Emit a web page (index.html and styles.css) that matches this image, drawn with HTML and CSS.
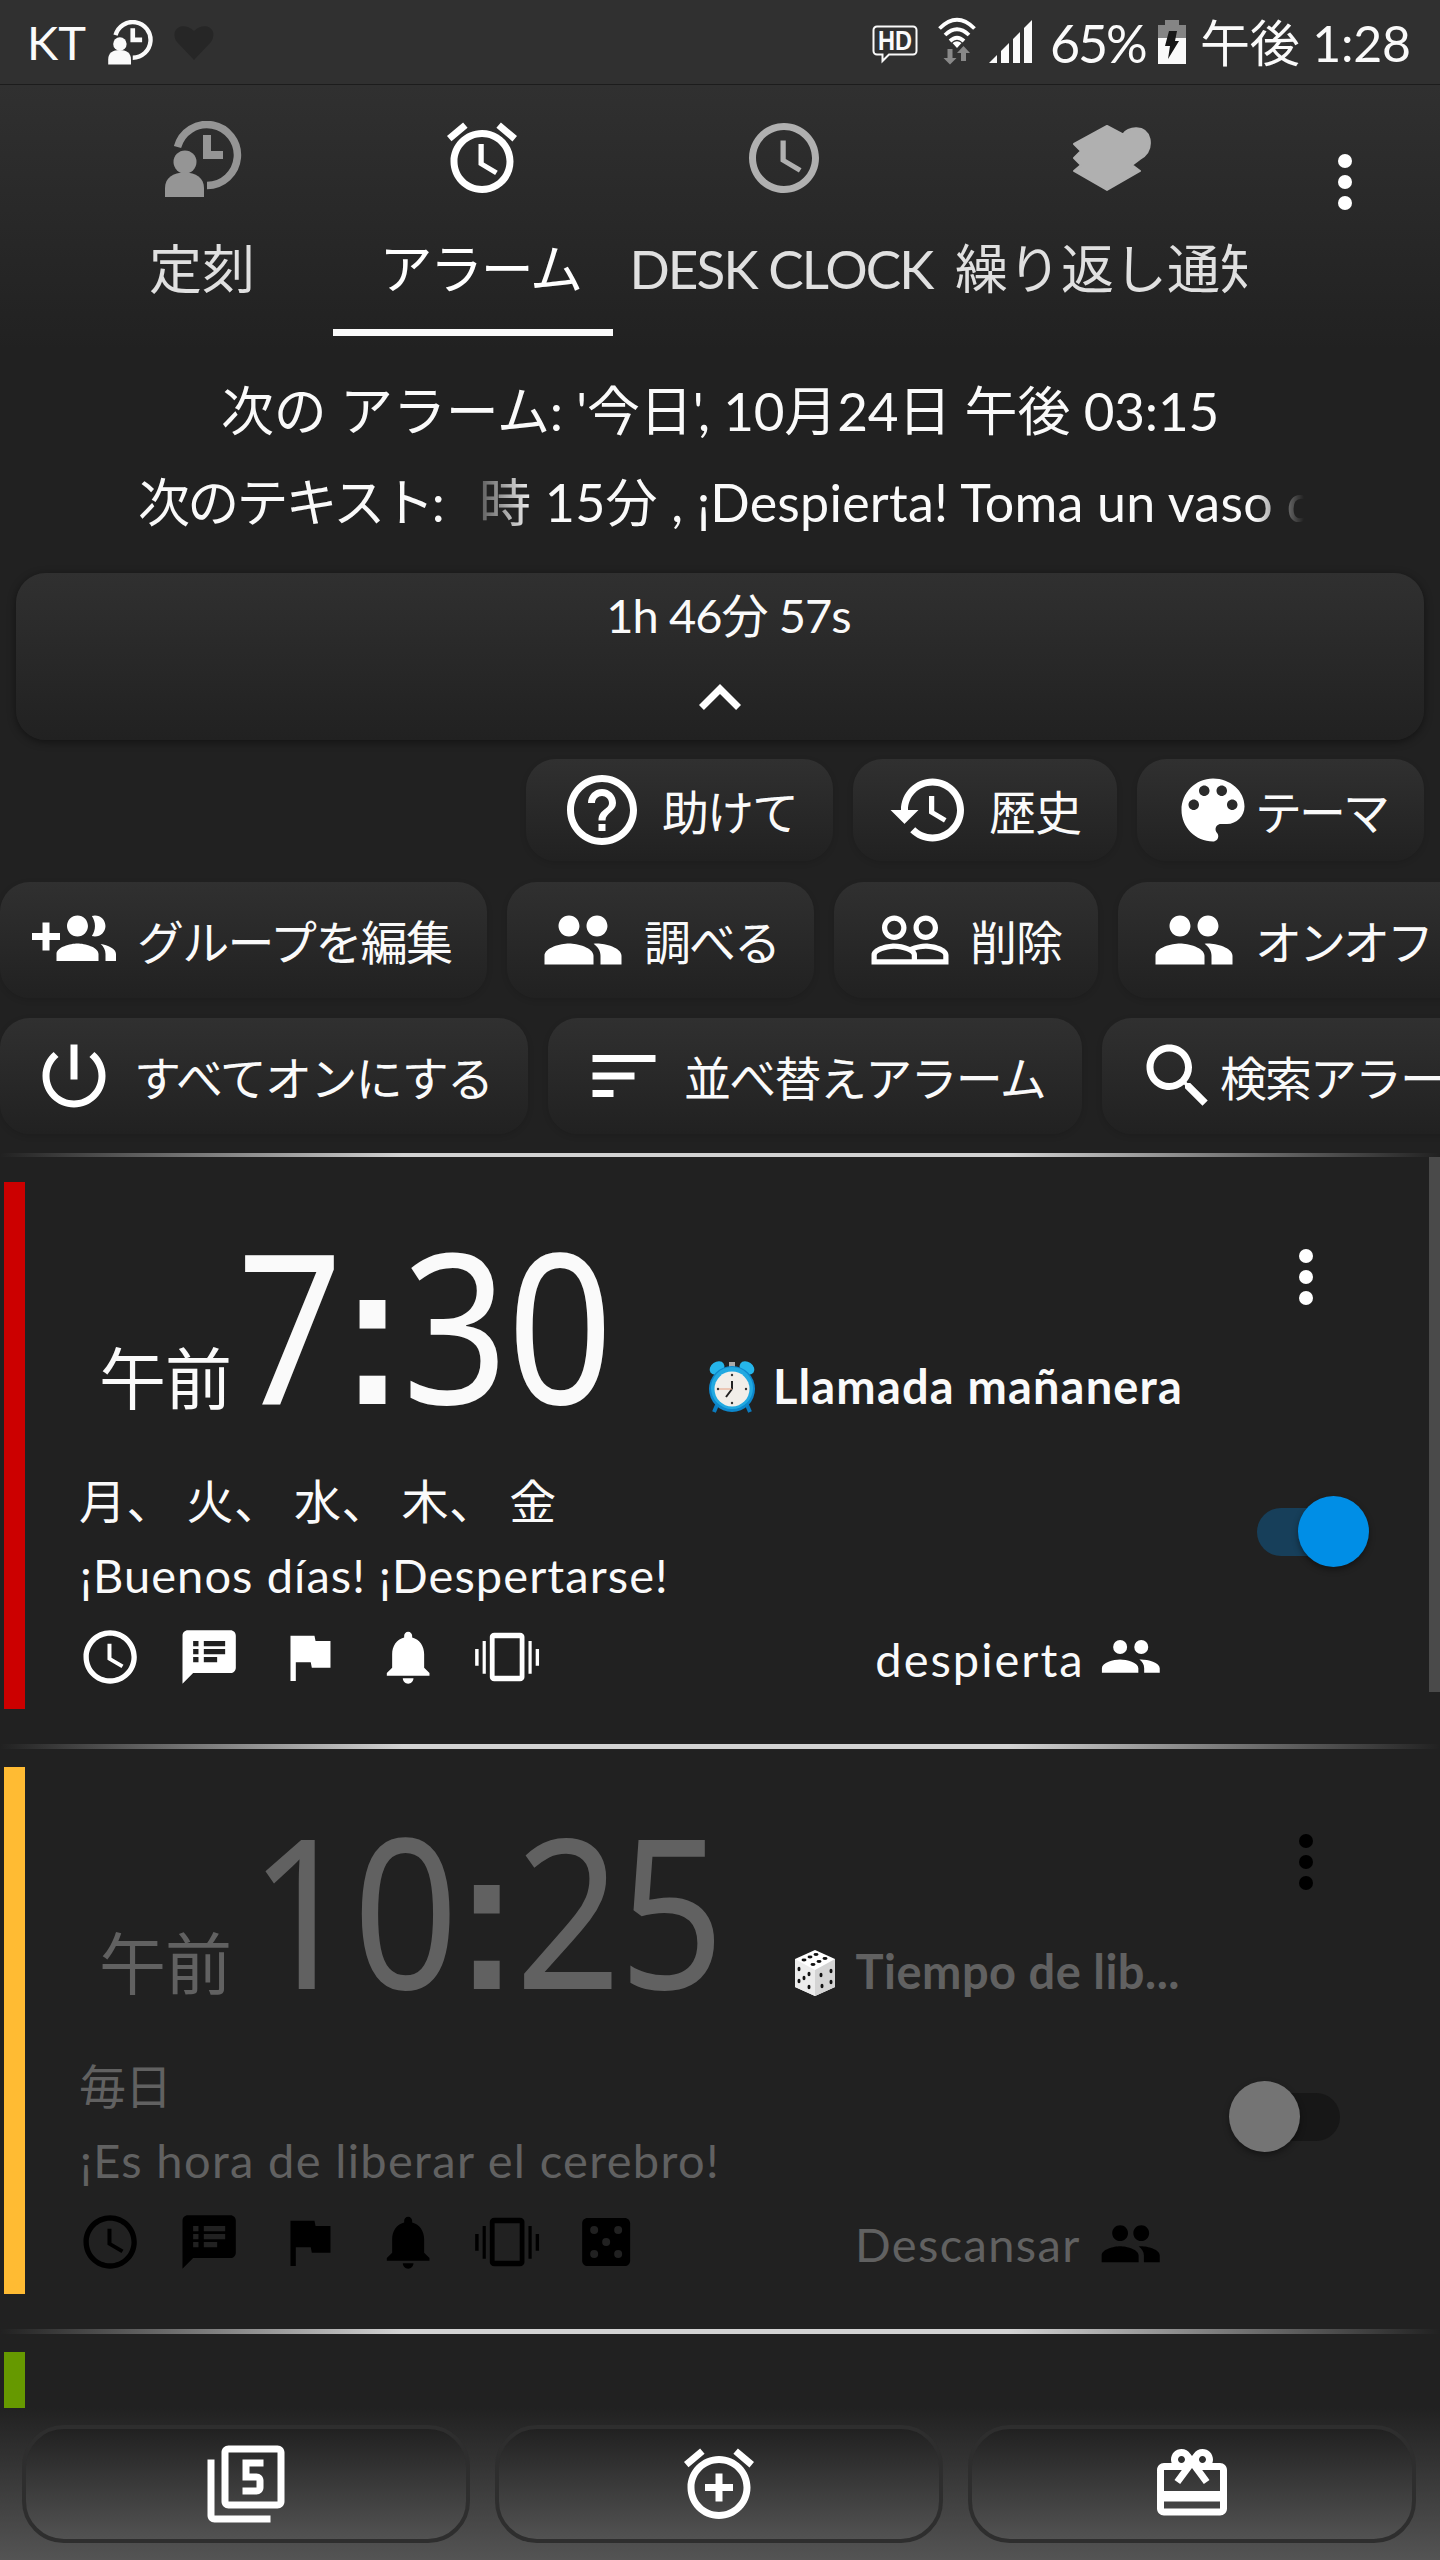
FILE: index.html
```html
<!DOCTYPE html>
<html lang="ja">
<head>
<meta charset="utf-8">
<title>アラーム</title>
<link rel="stylesheet" href="styles.css">
</head>
<body>
<svg class="sprite" aria-hidden="true">
  <symbol id="person-clock" viewBox="0 0 78 77"><path d="M12.5 26A30.5 30.5 0 1 1 42 64.5" fill="none" stroke="currentColor" stroke-width="7.5"/><path d="M38 14h8v16h12v8H38Z"/><ellipse cx="20" cy="41" rx="11.5" ry="11.5"/><path d="M0 76V67C0 57 8 51.500 19.500 51.500S39 57 39 67V76Z"/></symbol>
  <symbol id="alarm" viewBox="0 0 24 24"><path d="M22 5.720l-4.600-3.860-1.290 1.530 4.600 3.860L22 5.720zM7.880 3.390L6.600 1.860 2 5.710l1.290 1.530 4.590-3.850zM12.500 8H11v6l4.750 2.850.75-1.230-4-2.370V8zM12 4c-4.970 0-9 4.030-9 9s4.020 9 9 9c4.970 0 9-4.030 9-9s-4.030-9-9-9zm0 16c-3.870 0-7-3.130-7-7s3.130-7 7-7 7 3.130 7 7-3.130 7-7 7z"/></symbol>
  <symbol id="clock" viewBox="0 0 24 24"><path d="M11.990 2C6.470 2 2 6.480 2 12s4.470 10 9.990 10C17.520 22 22 17.520 22 12S17.520 2 11.990 2zM12 20c-4.420 0-8-3.580-8-8s3.580-8 8-8 8 3.580 8 8-3.580 8-8 8zm.5-13H11v6l5.250 3.150.75-1.230-4.500-2.670V7z"/></symbol>
  <symbol id="stack" viewBox="0 0 78 66"><path stroke="currentColor" stroke-width="2" stroke-linejoin="round" d="M34 1L50 9.500C54 2 73 -1 76.500 14C78.500 25 72 31 67 34L59 40L67 46L34 65L1 46L8 40L1 33L8 26L1 19Z"/></symbol>
  <symbol id="more" viewBox="0 0 24 24"><circle cx="12" cy="6" r="2"/><circle cx="12" cy="12" r="2"/><circle cx="12" cy="18" r="2"/></symbol>
  <symbol id="chevron" viewBox="0 0 24 24"><path d="M12 8l-6 6 1.410 1.410L12 10.830l4.590 4.580L18 14z"/></symbol>
  <symbol id="help" viewBox="0 0 24 24"><path d="M11 18h2v-2h-2v2zm1-16C6.480 2 2 6.480 2 12s4.480 10 10 10 10-4.480 10-10S17.520 2 12 2zm0 18c-4.410 0-8-3.590-8-8s3.590-8 8-8 8 3.590 8 8-3.590 8-8 8zm0-14c-2.210 0-4 1.790-4 4h2c0-1.100.9-2 2-2s2 .9 2 2c0 2-3 1.750-3 5h2c0-2.250 3-2.500 3-5 0-2.210-1.790-4-4-4z"/></symbol>
  <symbol id="history" viewBox="0 0 24 24"><path d="M13 3c-4.970 0-9 4.030-9 9H1l3.890 3.890.07.14L9 12H6c0-3.870 3.130-7 7-7s7 3.130 7 7-3.130 7-7 7c-1.930 0-3.680-.79-4.940-2.060l-1.420 1.420C8.270 19.990 10.510 21 13 21c4.970 0 9-4.030 9-9s-4.030-9-9-9zm-1 5v5l4.280 2.540.72-1.210-3.500-2.080V8H12z"/></symbol>
  <symbol id="palette" viewBox="0 0 24 24"><path d="M12 3c-4.970 0-9 4.030-9 9s4.030 9 9 9c.83 0 1.500-.67 1.500-1.500 0-.39-.15-.74-.39-1.010-.23-.26-.38-.61-.38-.99 0-.83.67-1.500 1.500-1.500H16c2.760 0 5-2.240 5-5 0-4.420-4.030-8-9-8zm-5.500 9c-.83 0-1.500-.67-1.500-1.500S5.670 9 6.500 9 8 9.670 8 10.500 7.330 12 6.500 12zm3-4C8.670 8 8 7.330 8 6.500S8.670 5 9.500 5s1.500.67 1.500 1.500S10.330 8 9.500 8zm5 0c-.83 0-1.500-.67-1.500-1.500S13.670 5 14.500 5s1.500.67 1.500 1.500S15.330 8 14.500 8zm3 4c-.83 0-1.500-.67-1.500-1.500S16.670 9 17.500 9s1.500.67 1.500 1.500-.67 1.500-1.500 1.500z"/></symbol>
  <symbol id="group-add" viewBox="0 0 24 24"><path d="M8 10H5V7H3v3H0v2h3v3h2v-3h3v-2zm10 1c1.660 0 2.990-1.340 2.990-3S19.660 5 18 5c-.32 0-.63.05-.91.14.57.81.9 1.790.9 2.860s-.34 2.040-.9 2.860c.28.09.59.14.91.14zm-5 0c1.660 0 2.990-1.340 2.990-3S14.660 5 13 5c-1.660 0-3 1.340-3 3s1.340 3 3 3zm6.620 2.160c.83.73 1.380 1.660 1.380 2.840v2h3v-2c0-1.540-2.370-2.490-4.380-2.840zM13 13c-2 0-6 1-6 3v2h12v-2c0-2-4-3-6-3z"/></symbol>
  <symbol id="people" viewBox="0 0 24 24"><path d="M16 11c1.660 0 2.990-1.340 2.990-3S17.660 5 16 5c-1.660 0-3 1.340-3 3s1.340 3 3 3zm-8 0c1.660 0 2.990-1.340 2.990-3S9.660 5 8 5C6.340 5 5 6.340 5 8s1.340 3 3 3zm0 2c-2.330 0-7 1.170-7 3.500V19h14v-2.500c0-2.330-4.670-3.500-7-3.500zm8 0c-.29 0-.62.02-.97.05 1.160.84 1.970 1.970 1.970 3.450V19h6v-2.500c0-2.330-4.670-3.500-7-3.500z"/></symbol>
  <symbol id="people-small" viewBox="0 0 24 24"><circle cx="8" cy="7.600" r="2.650"/><circle cx="16" cy="7.600" r="2.650"/><path d="M8 12.300c-2.500 0-6.900 1.100-6.900 3.300v1.700h13.800v-1.700c0-2.200-4.400-3.300-6.900-3.300zm8 0l-.7.050c1.100.9 1.800 1.900 1.800 3.250v1.700h5.900v-1.700c0-2.200-4.500-3.300-7-3.300z"/></symbol>
  <symbol id="people-outline" viewBox="0 0 24 24"><path d="M16.500 13c-1.200 0-3.070.34-4.500 1-1.430-.67-3.300-1-4.500-1C5.330 13 1 14.080 1 16.250V19h22v-2.750c0-2.170-4.330-3.250-6.500-3.250zm-4 4.500h-10v-1.250c0-.54 2.560-1.750 5-1.750s5 1.210 5 1.750v1.250zm9 0H14v-1.250c0-.46-.2-.86-.52-1.220.88-.3 1.960-.53 3.020-.53 2.440 0 5 1.210 5 1.750v1.250zM7.500 12c1.930 0 3.500-1.570 3.500-3.500S9.430 5 7.500 5 4 6.570 4 8.500 5.570 12 7.500 12zm0-5.500c1.100 0 2 .9 2 2s-.9 2-2 2-2-.9-2-2 .9-2 2-2zm9 5.500c1.930 0 3.500-1.570 3.500-3.500S18.430 5 16.500 5 13 6.570 13 8.500s1.570 3.500 3.500 3.500zm0-5.500c1.100 0 2 .9 2 2s-.9 2-2 2-2-.9-2-2 .9-2 2-2z"/></symbol>
  <symbol id="power" viewBox="0 0 24 24"><path d="M13 3h-2v10h2V3zm4.830 2.170l-1.420 1.420C17.990 7.860 19 9.810 19 12c0 3.870-3.130 7-7 7s-7-3.130-7-7c0-2.190 1.010-4.140 2.580-5.420L6.170 5.170C4.230 6.820 3 9.260 3 12c0 4.970 4.030 9 9 9s9-4.030 9-9c0-2.740-1.230-5.180-3.170-6.830z"/></symbol>
  <symbol id="sort" viewBox="0 0 24 24"><path d="M3 18h6v-2H3v2zM3 6v2h18V6H3zm0 7h12v-2H3v2z"/></symbol>
  <symbol id="search" viewBox="0 0 24 24"><path d="M15.500 14h-.79l-.28-.27C15.410 12.590 16 11.110 16 9.500 16 5.910 13.090 3 9.500 3S3 5.910 3 9.500 5.910 16 9.500 16c1.610 0 3.090-.59 4.230-1.570l.27.28v.79l5 4.990L20.490 19l-4.990-5zm-6 0C7.010 14 5 11.990 5 9.500S7.010 5 9.500 5 14 7.010 14 9.500 11.990 14 9.500 14z"/></symbol>
  <symbol id="notes" viewBox="0 0 24 24"><path d="M20 2H4c-1.100 0-1.990.9-1.990 2L2 22l4-4h14c1.100 0 2-.9 2-2V4c0-1.100-.9-2-2-2zM8 14H6v-2h2v2zm0-3H6V9h2v2zm0-3H6V6h2v2zm7 6h-5v-2h5v2zm3-3h-8V9h8v2zm0-3h-8V6h8v2z"/></symbol>
  <symbol id="flag" viewBox="0 0 24 24"><path d="M14.400 6L14 4H5v17h2v-7h5.600l.4 2h7V6z"/></symbol>
  <symbol id="bell" viewBox="0 0 24 24"><path d="M12 22c1.100 0 2-.9 2-2h-4c0 1.100.89 2 2 2zm6-6v-5c0-3.070-1.640-5.640-4.500-6.320V4c0-.83-.67-1.500-1.500-1.500s-1.500.67-1.500 1.500v.68C7.630 5.360 6 7.920 6 11v5l-2 2v1h16v-1l-2-2z"/></symbol>
  <symbol id="vibrate" viewBox="0 0 24 24"><path fill-rule="evenodd" d="M0 9h1.300v6.300H0zM2.800 6h1.200v12.300H2.800zM20 6h1.200v12.300H20zM22.700 9H24v6.300h-1.300zM7.200 2.900h9.600c1 0 1.700.7 1.700 1.500v15.200c0 .8-.7 1.500-1.700 1.500H7.200c-1 0-1.700-.7-1.700-1.500V4.400c0-.8.7-1.500 1.700-1.500zM7.300 5v14h9.400V5z"/></symbol>
  <symbol id="casino" viewBox="0 0 24 24"><path fill-rule="evenodd" d="M19 3H5c-1.100 0-2 .9-2 2v14c0 1.100.9 2 2 2h14c1.100 0 2-.9 2-2V5c0-1.100-.9-2-2-2zM7.500 6a1.500 1.500 0 1 1 0 3 1.500 1.500 0 0 1 0-3zM16.500 6a1.500 1.500 0 1 1 0 3 1.500 1.500 0 0 1 0-3zM12 10.500a1.500 1.500 0 1 1 0 3 1.500 1.500 0 0 1 0-3zM7.500 15a1.500 1.500 0 1 1 0 3 1.500 1.500 0 0 1 0-3zM16.500 15a1.500 1.500 0 1 1 0 3 1.500 1.500 0 0 1 0-3z"/></symbol>
  <symbol id="filter5" viewBox="0 0 24 24"><path d="M21 1H7c-1.100 0-2 .9-2 2v14c0 1.100.9 2 2 2h14c1.100 0 2-.9 2-2V3c0-1.100-.9-2-2-2zm0 16H7V3h14v14zM3 5H1v16c0 1.100.9 2 2 2h16v-2H3V5zm14 8v-2c0-1.110-.9-2-2-2h-2V7h4V5h-6v6h4v2h-4v2h4c1.100 0 2-.89 2-2z"/></symbol>
  <symbol id="alarm-add" viewBox="0 0 24 24"><path d="M7.880 3.390L6.600 1.860 2 5.710l1.290 1.530 4.590-3.850zM22 5.720l-4.600-3.860-1.290 1.530 4.600 3.860L22 5.720zM12 4c-4.970 0-9 4.030-9 9s4.020 9 9 9c4.970 0 9-4.030 9-9s-4.030-9-9-9zm0 16c-3.870 0-7-3.130-7-7s3.130-7 7-7 7 3.130 7 7-3.130 7-7 7zm1-11h-2v3H8v2h3v3h2v-3h3v-2h-3V9z"/></symbol>
  <symbol id="gift" viewBox="0 0 24 24"><path d="M20 6h-2.180c.11-.31.18-.65.18-1 0-1.660-1.340-3-3-3-1.050 0-1.960.54-2.500 1.350l-.5.67-.5-.68C10.960 2.540 10.050 2 9 2 7.340 2 6 3.340 6 5c0 .35.07.69.18 1H4c-1.110 0-1.990.89-1.990 2L2 19c0 1.110.89 2 2 2h16c1.110 0 2-.89 2-2V8c0-1.110-.89-2-2-2zm-5-2c.55 0 1 .45 1 1s-.45 1-1 1-1-.45-1-1 .45-1 1-1zM9 4c.55 0 1 .45 1 1s-.45 1-1 1-1-.45-1-1 .45-1 1-1zm11 15H4v-2h16v2zm0-5H4V8h5.080L7 10.830 8.620 12 11 8.760l1-1.360 1 1.360L15.380 12 17 10.830 14.920 8H20v6z"/></symbol>
</svg>

<div class="screen">
  <header class="status">
    <span class="carrier">KT</span>
    <svg class="s-person"><use href="#person-clock"/></svg>
    <svg class="s-heart" viewBox="0 0 40 35"><path d="M20 35L3 17C-5 5 8-5 20 6C32-5 45 5 37 17Z"/></svg>
    <svg class="s-hd" viewBox="0 0 46 38"><path d="M5 1.500h36a3.500 3.500 0 0 1 3.500 3.500v21a3.500 3.500 0 0 1-3.500 3.500H17l-6.500 6.500v-6.500H5A3.500 3.500 0 0 1 1.500 26V5A3.500 3.500 0 0 1 5 1.500z" fill="none" stroke="#fafafa" stroke-width="2"/><text x="23" y="25" text-anchor="middle" textLength="34" lengthAdjust="spacingAndGlyphs">HD</text></svg>
    <svg class="s-wifi" viewBox="0 0 38 46"><g fill="none" stroke="#fff" stroke-width="3.800"><path d="M1.500 10.500Q19-7 36.500 10.500M7 17Q19 5.500 31 17M12 23Q19 16.500 26 23"/></g><path d="M14.500 25Q19 21.500 23.500 25L19 30z" fill="#fff"/><path d="M9.500 31h5v9h4l-6.500 6.500L5.500 40h4zM23 43h5v-8h4l-6.500-7-6.500 7H23z" fill="#888"/></svg>
    <svg class="s-signal" viewBox="0 0 44 44"><path d="M0 43L8 35V43ZM12 43V31L20 23V43ZM24 43V19L31 12V43ZM35 43V8L43 0V43Z"/></svg>
    <span class="percent">65%</span>
    <svg class="s-battery" viewBox="0 0 28 44"><path d="M7 0h14v5h7v13H0V5h7z" fill="#858585"/><path d="M0 18h28v26H0z" fill="#fafafa"/><path d="M11 11h8l-2 10h4L10 39l2-13H7z" fill="#161616"/></svg>
    <span class="clock">午後 1:28</span>
  </header>

  <nav class="tabs">
    <div class="tab-strip">
      <div class="tab"><svg class="icon-person"><use href="#person-clock"/></svg><span>定刻</span></div>
      <div class="tab active"><svg class="icon"><use href="#alarm"/></svg><span class="tab-alarm">アラーム</span></div>
      <div class="tab tab-wide"><svg class="icon"><use href="#clock"/></svg><span class="tab-desk">DESK CLOCK</span></div>
      <div class="tab tab-last"><svg class="icon-stack"><use href="#stack"/></svg><span>繰り返し通知</span></div>
    </div>
    <svg class="icon more"><use href="#more"/></svg>
  </nav>

  <section class="next">
    <p class="next-alarm">次の アラーム: '今日', 10月24日 午後 03:15</p>
    <div class="next-text"><span class="next-label">次のテキスト:</span><div class="marquee">時 15分 , ¡Despierta! Toma un vaso de agua</div></div>
  </section>

  <section class="countdown">
    <span class="remaining">1h 46分 57s</span>
    <svg class="icon"><use href="#chevron"/></svg>
  </section>

  <div class="chips chips-end">
    <button class="chip w-307"><svg class="icon"><use href="#help"/></svg><span>助けて</span></button>
    <button class="chip w-264"><svg class="icon"><use href="#history"/></svg><span class="l-history">歴史</span></button>
    <button class="chip w-287 tight"><svg class="icon"><use href="#palette"/></svg><span class="l-theme">テーマ</span></button>
  </div>
  <div class="chips">
    <button class="chip w-487"><svg class="icon"><use href="#group-add"/></svg><span class="l-edit">グループを編集</span></button>
    <button class="chip w-307"><svg class="icon"><use href="#people"/></svg><span class="l-check">調べる</span></button>
    <button class="chip w-264"><svg class="icon"><use href="#people-outline"/></svg><span class="l-delete">削除</span></button>
    <button class="chip w-400"><svg class="icon"><use href="#people"/></svg><span class="l-onoff">オンオフ</span></button>
  </div>
  <div class="chips">
    <button class="chip w-528"><svg class="icon"><use href="#power"/></svg><span class="l-allon">すべてオンにする</span></button>
    <button class="chip w-534"><svg class="icon"><use href="#sort"/></svg><span class="l-sort">並べ替えアラーム</span></button>
    <button class="chip w-460 tight"><svg class="icon"><use href="#search"/></svg><span class="l-search">検索アラーム</span></button>
  </div>

  <div class="rule rule-top"></div>

  <main class="list">
    <article class="alarm">
      <div class="strip red"></div>
      <div class="body">
        <div class="head">
          <span class="ampm">午前</span><span class="time t-730">7<i>:</i>30</span>
          <span class="title"><svg class="emoji" viewBox="0 0 46 52"><path d="M8 44l-3 7M38 44l3 7" stroke="#0b7cc0" stroke-width="4"/><ellipse cx="8" cy="7" rx="8" ry="6" transform="rotate(-35 8 7)" fill="#25b5ea"/><ellipse cx="38" cy="7" rx="8" ry="6" transform="rotate(35 38 7)" fill="#25b5ea"/><path d="M20 1h6v5h-6z" fill="#aaa"/><circle cx="23" cy="28" r="23" fill="#0d87cc"/><circle cx="23" cy="27" r="21" fill="#21a9e1"/><circle cx="23" cy="28" r="17.500" fill="#f1eee9"/><path d="M23 28V20M23 28l-6 8" stroke="#222" stroke-width="2"/><path d="M23 28H9" stroke="#e5a080"/><g fill="#333"><circle cx="23" cy="14" r="1.200"/><circle cx="23" cy="42" r="1.200"/><circle cx="37" cy="28" r="1.200"/><circle cx="9" cy="28" r="1.200"/></g></svg><b class="t-llamada">Llamada mañanera</b></span>
        </div>
        <p class="days">月、 火、 水、 木、 金</p>
        <p class="message">¡Buenos días! ¡Despertarse!</p>
        <div class="foot">
          <div class="marks"><svg><use href="#clock"/></svg><svg><use href="#notes"/></svg><svg><use href="#flag"/></svg><svg><use href="#bell"/></svg><svg><use href="#vibrate"/></svg></div>
          <span class="group g-despierta">despierta</span><svg class="people"><use href="#people-small"/></svg>
        </div>
      </div>
      <div class="side"><svg class="icon"><use href="#more"/></svg><div class="switch on"><i></i></div></div>
      <div class="rule"></div>
    </article>
    <article class="alarm off">
      <div class="strip amber"></div>
      <div class="body">
        <div class="head">
          <span class="ampm">午前</span><span class="time t-1025">10<i>:</i>25</span>
          <span class="title"><svg class="emoji die" viewBox="0 0 42 46"><path d="M21 0L41 9V37L21 46L1 37V9Z" fill="#fff"/><path d="M21 20L41 9V37L21 46Z" fill="#d4d4d4"/><path d="M21 20L1 9V37L21 46Z" fill="#ececec"/><g fill="#111"><ellipse cx="22" cy="4.500" rx="2.500" ry="1.400"/><ellipse cx="16" cy="7" rx="2.500" ry="1.400"/><ellipse cx="10" cy="10" rx="2.500" ry="1.400"/><ellipse cx="31" cy="8.500" rx="2.500" ry="1.400"/><ellipse cx="25" cy="11.500" rx="2.500" ry="1.400"/><ellipse cx="19" cy="14.500" rx="2.500" ry="1.400"/><ellipse cx="5" cy="19" rx="1.500" ry="2.300"/><ellipse cx="15" cy="24" rx="1.500" ry="2.300"/><ellipse cx="10" cy="28" rx="1.500" ry="2.300"/><ellipse cx="5" cy="31" rx="1.500" ry="2.300"/><ellipse cx="15" cy="37" rx="1.500" ry="2.300"/><ellipse cx="27" cy="25" rx="1.500" ry="2.300"/><ellipse cx="37" cy="21" rx="1.500" ry="2.300"/><ellipse cx="28" cy="36" rx="1.500" ry="2.300"/><ellipse cx="37" cy="32" rx="1.500" ry="2.300"/></g></svg><b class="t-tiempo">Tiempo de lib...</b></span>
        </div>
        <p class="days d-daily">毎日</p>
        <p class="message m-hora">¡Es hora de liberar el cerebro!</p>
        <div class="foot">
          <div class="marks"><svg><use href="#clock"/></svg><svg><use href="#notes"/></svg><svg><use href="#flag"/></svg><svg><use href="#bell"/></svg><svg><use href="#vibrate"/></svg><svg><use href="#casino"/></svg></div>
          <span class="group">Descansar</span><svg class="people"><use href="#people"/></svg>
        </div>
      </div>
      <div class="side"><svg class="icon"><use href="#more"/></svg><div class="switch"><i></i></div></div>
      <div class="rule"></div>
    </article>
    <article class="alarm"><div class="strip green"></div></article>
    <div class="scrollbar"></div>
  </main>

  <footer class="bottom">
    <button><svg class="icon"><use href="#filter5"/></svg></button>
    <button><svg class="icon"><use href="#alarm-add"/></svg></button>
    <button><svg class="icon"><use href="#gift"/></svg></button>
  </footer>
</div>
</body>
</html>
```
FILE: styles.css
```css
* { box-sizing: border-box; }
body { margin: 0; background: #212121; }
.sprite { display: none; }
.screen {
  width: 1440px; height: 2560px; overflow: hidden;
  display: flex; flex-direction: column;
  background: #212121; color: #fafafa;
  font-family: Lato, "Noto Sans CJK JP", sans-serif;
  font-size: 47px; line-height: 60px; white-space: nowrap;
}
svg { display: block; flex: none; fill: currentColor; overflow: visible; }
p { margin: 0; }
button { margin: 0; padding: 0; border: 0; background: none; color: inherit; font: inherit; letter-spacing: inherit; }
.icon { width: 84px; height: 84px; color: #fff; }

/* status bar */
.status { flex: none; height: 85px; display: flex; background: #303030; border-bottom: 1px solid #1c1c1c; }
.carrier { margin: 12px 0 0 27px; width: 60px; }
.s-person { width: 46px; height: 45px; margin: 20px 0 0 21px; }
.s-heart { width: 40px; height: 35px; margin: 25px 0 0 20px; color: #262626; }
.s-hd { width: 46px; height: 38px; margin: 25px 0 0 658px; }
.s-hd text { font: bold 28px "Liberation Sans", sans-serif; }
.s-wifi { width: 38px; height: 46px; margin: 18px 0 0 20px; }
.s-signal { width: 44px; height: 44px; margin: 20px 0 0 13px; }
.percent { width: 100px; margin: 13px 0 0 17px; font-size: 52px; letter-spacing: -2.2px; }
.s-battery { width: 28px; height: 44px; margin: 20px 0 0 8px; }
.clock { margin: 13px 0 0 14px; font-size: 50px; letter-spacing: -.2px; }

/* tabs */
.tabs { flex: none; height: 265px; display: flex; background: linear-gradient(#303030, #212121); }
.tab-strip { width: 1247px; padding-left: 62px; display: flex; overflow: hidden; }
.tab { position: relative; flex: none; width: 280px; padding-top: 31px; display: flex; flex-direction: column; align-items: center; gap: 37px; font-size: 53px; line-height: 64px; color: #e0e0e0; }
.tab .icon { color: #b0b0b0; }
.tab.active, .tab.active .icon { color: #fff; }
.tab.active::after { content: ""; position: absolute; left: -9px; top: 244px; width: 280px; height: 7px; background: #fafafa; }
.tab-alarm { letter-spacing: -2.3px; margin-left: -4px; }
.tab-desk { letter-spacing: -1.9px; margin-left: -6px; }
.tab-wide { width: 324px; }
.tab-last { width: 332px; }
.tab-last span { margin-left: 4px; }
.icon-person { width: 78px; height: 77px; margin: 5px 0 2px 3px; color: #959595; }
.icon-stack { width: 78px; height: 66px; margin: 9px 0; color: #b0b0b0; }
.more { margin: 55px 0 0 56px; }

/* next alarm */
.next { flex: none; padding-top: 29px; font-size: 53px; line-height: 64px; }
.next-alarm { padding-left: 221px; letter-spacing: -.16px; }
.next-text { display: flex; margin-top: 27px; padding-left: 138px; font-size: 52px; }
.next-label { width: 336px; letter-spacing: -2.8px; }
.marquee { width: 830px; padding-left: 5px; overflow: hidden; mask-image: linear-gradient(90deg, rgba(0,0,0,.2), #000 60px, #000 780px, transparent); letter-spacing: .23px; }

.countdown { flex: none; height: 167px; margin: 39px 16px 0; padding-top: 12px; border-radius: 30px; background: linear-gradient(#303030, #212121); box-shadow: 0 2px 8px rgba(0,0,0,.45); display: flex; flex-direction: column; align-items: center; gap: 11px; }
.remaining { margin-left: 17px; letter-spacing: -.95px; }

/* action chips */
.chips { flex: none; display: flex; gap: 20px; margin-top: 20px; height: 116px; }
.chips-end { justify-content: flex-end; margin: 19px 16px 1px; height: 102px; }
.chip { flex: none; padding-left: 34px; display: flex; align-items: center; gap: 18px; border-radius: 30px; background: linear-gradient(#303030, #212121); box-shadow: 0 2px 6px rgba(0,0,0,.12); letter-spacing: -2px; }
.chip span { padding-top: 3px; }
.chip .l-history, .chip .l-delete { letter-spacing: -1px; }
.chip .l-theme, .chip .l-onoff { letter-spacing: -3px; }
.chip .l-edit { letter-spacing: -1.7px; margin-left: 3px; }
.chip .l-sort { letter-spacing: -1.7px; }
.chip .l-allon { letter-spacing: -1.6px; }
.chip .l-check, .chip .l-onoff { margin-left: 1px; }
.tight { gap: 0; }
.w-264 { width: 264px; }
.w-287 { width: 287px; }
.w-307 { width: 307px; }
.w-400 { width: 400px; }
.w-460 { width: 460px; }
.w-487 { width: 487px; padding-left: 32px; }
.w-528 { width: 528px; padding-left: 32px; }
.w-534 { width: 534px; }

.rule { height: 5px; background: linear-gradient(90deg, transparent, #d3d3d3 28%, #d3d3d3 70%, transparent); }
.rule-top { flex: none; height: 4px; margin-top: 19px; }

/* alarm list */
.list { position: relative; flex: 1; min-height: 0; overflow: hidden; padding-top: 7px; }
.alarm { height: 585px; display: grid; grid-template: 580px 5px / 80px 1104px 256px; }
.alarm .rule { grid-column: 1 / 4; }
.strip { width: 21px; height: 527px; margin: 18px 0 0 4px; }
.red { background: #c00; }
.amber { background: #fb3; }
.green { background: #690; }
.head { padding-top: 60px; height: 260px; display: flex; align-items: baseline; line-height: 200px; }
.ampm { width: 162px; padding-left: 19px; font-size: 67px; letter-spacing: -1px; }
.time { font-family: "Noto Sans", sans-serif; font-size: 208px; letter-spacing: -1px; transform: scaleX(.89); transform-origin: left; }
.time i { font: bold 206px/1 "Liberation Sans", sans-serif; }
.t-730 { margin-left: -5px; }
.t-1025 { margin-left: 7px; letter-spacing: -2.5px; }
.title { margin-left: auto; display: flex; align-items: baseline; }
.emoji { width: 46px; height: 52px; margin-right: 18px; position: relative; top: 9px; }
.die { width: 42px; height: 46px; top: 7px; margin-right: 20px; }
.t-llamada { letter-spacing: 1.17px; margin-right: 1px; }
.t-tiempo { letter-spacing: .5px; margin-right: 4px; }
.days { margin: 47px 0 0 -1px; letter-spacing: .5px; }
.d-daily { letter-spacing: -1px; }
.message { margin-top: 14px; letter-spacing: 1.08px; }
.m-hora { letter-spacing: 1.34px; }
.foot { margin-top: 20px; display: flex; }
.marks { width: 700px; margin-left: -2px; display: flex; gap: 35px; color: #fff; }
.marks svg { width: 64.300px; height: 64px; }
.group { margin: 4px 18px 0 auto; letter-spacing: 1.34px; }
.g-despierta { margin-right: 14px; letter-spacing: 2px; }
.people { width: 63.400px; height: 63.400px; margin: 2px 22px 0 0; color: #fff; }
.side { padding-top: 71px; }
.side .icon { margin-left: 80px; }
.switch { position: relative; width: 100px; height: 48px; margin: 189px 0 0 56px; border-radius: 24px; background: #171717; }
.switch i { position: absolute; left: -11px; top: -12px; width: 71px; height: 71px; border-radius: 50%; background: #747474; box-shadow: 0 3px 6px rgba(0,0,0,.4); }
.on { margin-left: 73px; background: #173f5a; }
.on i { left: 41px; background: #008ee6; }
.off { color: #616161; }
.off .marks, .off .people, .off .icon { color: #000; }
.scrollbar { position: absolute; right: 0; top: 0; width: 11px; height: 535px; background: #4a4a4a; }

/* bottom bar */
.bottom { flex: none; height: 152px; padding: 17px 22px; display: flex; gap: 25px; background: linear-gradient(#212121, #545454); }
.bottom button { width: 448px; height: 118px; display: flex; justify-content: center; align-items: center; border: 4px solid #2e2e2e; border-radius: 42px; background: linear-gradient(#212121, #525252); }
```
